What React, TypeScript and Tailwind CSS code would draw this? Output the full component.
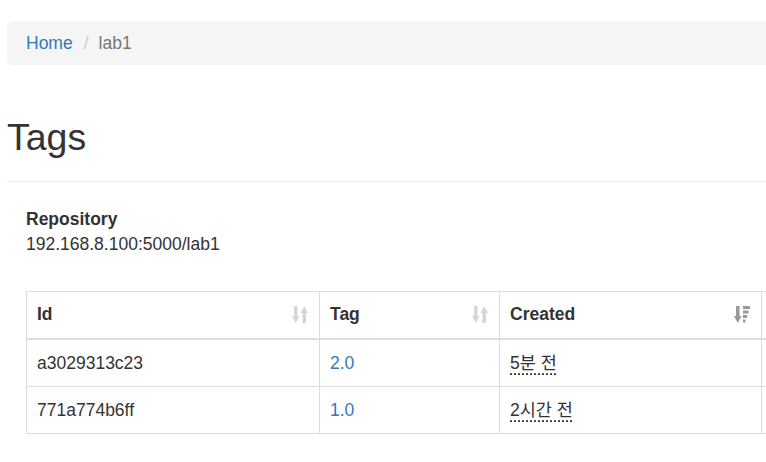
import React from 'react';

function SortIcon({ className }: { className?: string }) {
  return (
    <svg viewBox="0 0 16 17" width="16" height="17" className={className} fill="currentColor">
      {/* down arrow */}
      <rect x="2" y="0" width="3.5" height="11" />
      <polygon points="0,10 7.5,10 3.75,17" />
      {/* up arrow */}
      <polygon points="8.5,7 16,7 12.25,0" />
      <rect x="10.5" y="6" width="3.5" height="11" />
    </svg>
  );
}

function SortDescIcon({ className }: { className?: string }) {
  return (
    <svg viewBox="0 0 16 17" width="16" height="17" className={className} fill="currentColor">
      <rect x="2" y="0" width="3.5" height="11" />
      <polygon points="0,10 7.5,10 3.75,17" />
      <rect x="9" y="0" width="7" height="3" />
      <rect x="9" y="4.5" width="5.5" height="3" />
      <rect x="9" y="9" width="4" height="3" />
      <rect x="9" y="13.5" width="2.5" height="3" />
    </svg>
  );
}

const rows = [
  { id: 'a3029313c23', tag: '2.0', created: '5분 전' },
  { id: '771a774b6ff', tag: '1.0', created: '2시간 전' },
];

export default function App() {
  return (
    <div
      className="w-[766px] h-[462px] overflow-hidden bg-white text-[#333] text-[17.5px] leading-[25px]"
      style={{ fontFamily: '"Liberation Sans", Arial, "Noto Sans CJK KR", sans-serif' }}
    >
      <div className="w-[900px] pl-[7px]">
        {/* Breadcrumb */}
        <ol className="mt-[21px] h-[44px] flex items-center px-[19px] bg-[#f5f5f5] rounded-[5px]">
          <li className="text-[#337ab7]">Home</li>
          <li className="text-[#ccc] pl-[11px] pr-[10px]">/</li>
          <li className="text-[#777]">lab1</li>
        </ol>

        {/* Page header */}
        <div className="mt-[52px] pb-[24px] border-b border-[#eee]">
          <h1 className="text-[37.5px] leading-[40px] font-normal">Tags</h1>
        </div>

        <div className="pl-[19px]">
          <dl className="mt-[25px]">
            <dt className="font-bold">Repository</dt>
            <dd>192.168.8.100:5000/lab1</dd>
          </dl>

          <table className="mt-[34px] border-collapse border border-[#ddd] table-fixed w-[880px]">
            <thead>
              <tr>
                <th className="w-[293px] border border-b-2 border-[#ddd] px-[10px] pt-[10px] pb-[11px] text-left font-bold">
                  <div className="flex items-center justify-between">
                    <span>Id</span>
                    <SortIcon className="text-[#d6d6d6] mr-[1px]" />
                  </div>
                </th>
                <th className="w-[180px] border border-b-2 border-[#ddd] px-[10px] pt-[10px] pb-[11px] text-left font-bold">
                  <div className="flex items-center justify-between">
                    <span>Tag</span>
                    <SortIcon className="text-[#d6d6d6] mr-[1px]" />
                  </div>
                </th>
                <th className="w-[262px] border border-b-2 border-[#ddd] px-[10px] pt-[10px] pb-[11px] text-left font-bold">
                  <div className="flex items-center justify-between">
                    <span>Created</span>
                    <SortDescIcon className="text-[#999] mr-[1px]" />
                  </div>
                </th>
                <th className="border border-b-2 border-[#ddd] px-[10px] pt-[10px] pb-[11px] text-left font-bold">
                  <span>&nbsp;</span>
                </th>
              </tr>
            </thead>
            <tbody>
              {rows.map((r) => (
                <tr key={r.id}>
                  <td className="border border-[#ddd] px-[10px] pt-[11px] pb-[10px]">{r.id}</td>
                  <td className="border border-[#ddd] px-[10px] pt-[11px] pb-[10px] text-[#337ab7]">{r.tag}</td>
                  <td className="border border-[#ddd] px-[10px] pt-[11px] pb-[10px]">
                    <abbr className="underline decoration-dotted underline-offset-[5px]">
                      {r.created}
                    </abbr>
                  </td>
                  <td className="border border-[#ddd] px-[10px] pt-[11px] pb-[10px]"></td>
                </tr>
              ))}
            </tbody>
          </table>
        </div>
      </div>
    </div>
  );
}
